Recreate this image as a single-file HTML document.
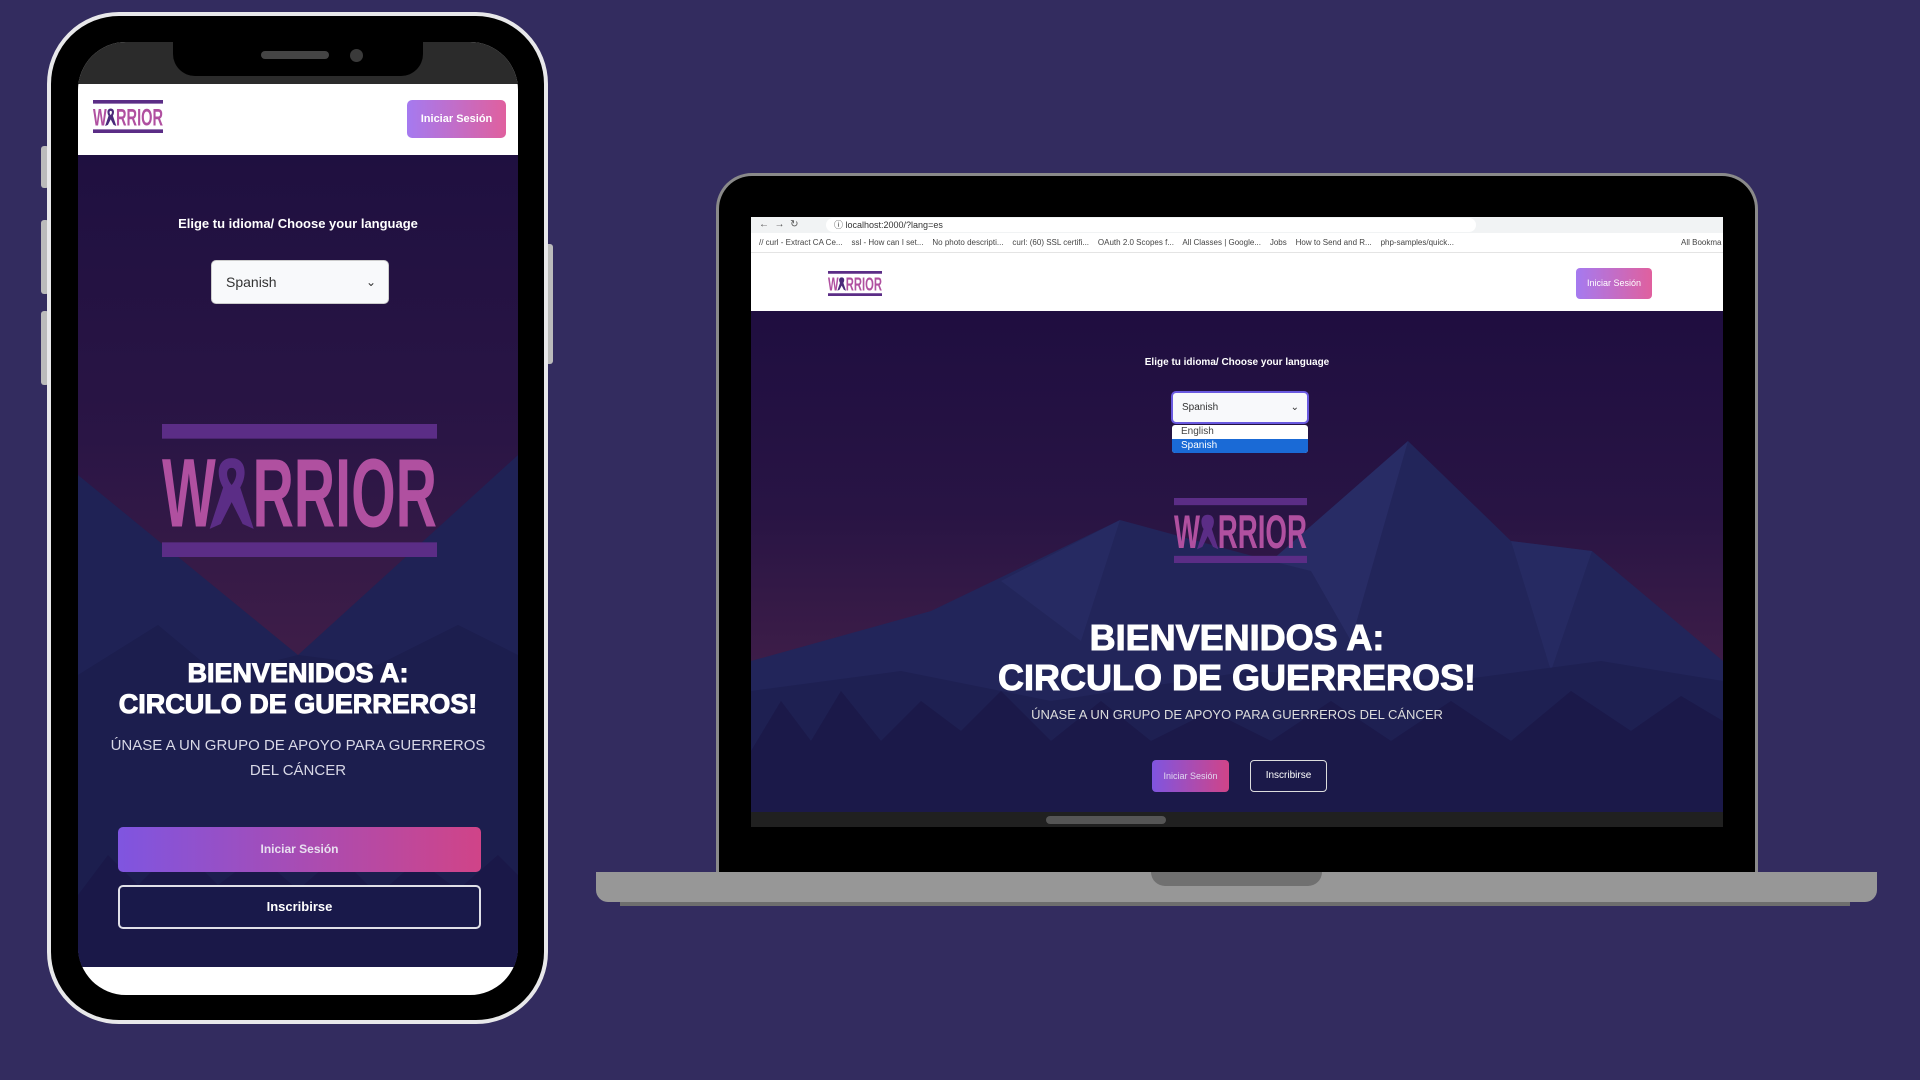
<!DOCTYPE html>
<html><head><meta charset="utf-8"><style>
*{margin:0;padding:0;box-sizing:border-box}
body{width:1920px;height:1080px;background:#332c5f;position:relative;overflow:hidden;font-family:"Liberation Sans",sans-serif}
.abs{position:absolute}
.c{text-align:center;color:#fff}
</style></head><body>

<!-- PHONE -->
<div class="abs" style="left:41px;top:146px;width:8px;height:42px;background:#bbb;border-radius:3px"></div>
<div class="abs" style="left:41px;top:220px;width:8px;height:74px;background:#bbb;border-radius:3px"></div>
<div class="abs" style="left:41px;top:311px;width:8px;height:74px;background:#bbb;border-radius:3px"></div>
<div class="abs" style="left:545px;top:244px;width:8px;height:120px;background:#bbb;border-radius:3px"></div>
<div class="abs" style="left:47px;top:12px;width:501px;height:1012px;background:#000;border:4px solid #e8e8ea;border-radius:72px"></div>
<div class="abs" style="left:78px;top:42px;width:440px;height:953px;background:#fff;border-radius:48px;overflow:hidden">
  <div class="abs" style="left:0;top:0;width:440px;height:42px;background:#2b2b2b"></div>
  <div class="abs" style="left:95px;top:0;width:250px;height:34px;background:#000;border-radius:0 0 22px 22px"></div>
  <div class="abs" style="left:183px;top:9px;width:68px;height:8px;background:#444;border-radius:4px"></div>
  <div class="abs" style="left:272px;top:7px;width:13px;height:13px;background:#3a3a3a;border-radius:50%"></div>
  <svg class="abs" style="left:15px;top:58px" width="70" height="33" viewBox="0 0 225 109" preserveAspectRatio="none">
    <rect width="225" height="12" fill="#5b2d86"/><rect y="97" width="225" height="12" fill="#5b2d86"/>
    <text x="0" y="84" font-family="Liberation Sans" font-weight="bold" font-size="80" textLength="44" lengthAdjust="spacingAndGlyphs" fill="#b050a0">W</text>
    <path d="M57 28 C45 28 44 42 50 52 L39 86 L48 82 L57 64 L66 82 L75 86 L64 52 C70 42 69 28 57 28 Z M57 36 C62 36 62 44 57 50 C52 44 52 36 57 36Z" fill="#4a2a7a" fill-rule="evenodd"/>
    <text x="74" y="84" font-family="Liberation Sans" font-weight="bold" font-size="80" textLength="151" lengthAdjust="spacingAndGlyphs" fill="#b050a0">RRIOR</text>
  </svg>
  <div class="abs c" style="left:329px;top:58px;width:99px;height:38px;border-radius:5px;background:linear-gradient(90deg,#a57af0,#e0609e);font-size:11px;font-weight:bold;line-height:38px">Iniciar Sesión</div>
  <div class="abs" style="left:0;top:113px;width:440px;height:812px;background:linear-gradient(#1f1040 0%,#2a1545 35%,#3d1d48 60%,#3a1d48 100%);overflow:hidden">
    <svg class="abs" style="left:0;top:0" width="440" height="812">
      <polygon points="0,320 220,500 440,300 440,812 0,812" fill="#1f2255"/>
      <polygon points="0,520 80,470 140,520 220,500 300,510 380,470 440,500 440,812 0,812" fill="#1c1e4e"/>
      <polygon points="0,740 30,700 60,730 100,690 140,730 180,700 220,735 260,700 300,740 340,705 380,735 420,700 440,720 440,812 0,812" fill="#1a1848"/>
    </svg>
    <div class="abs c" style="left:0;top:61px;width:440px;font-size:13px;font-weight:bold">Elige tu idioma/ Choose your language</div>
    <div class="abs" style="left:133px;top:105px;width:178px;height:44px;background:#f8f9fb;border-radius:5px;border:1px solid #ccc;font-size:14px;color:#333;line-height:42px;padding-left:14px">Spanish<span style="position:absolute;right:12px;top:0;font-size:12px">&#8964;</span></div>
    <svg class="abs" style="left:84px;top:269px" width="275" height="133" viewBox="0 0 225 109" preserveAspectRatio="none">
      <rect width="225" height="12" fill="#5b2d86"/><rect y="97" width="225" height="12" fill="#5b2d86"/>
      <text x="0" y="84" font-family="Liberation Sans" font-weight="bold" font-size="80" textLength="44" lengthAdjust="spacingAndGlyphs" fill="#b050a0">W</text>
      <path d="M57 28 C45 28 44 42 50 52 L39 86 L48 82 L57 64 L66 82 L75 86 L64 52 C70 42 69 28 57 28 Z M57 36 C62 36 62 44 57 50 C52 44 52 36 57 36Z" fill="#5b2d86" fill-rule="evenodd"/>
      <text x="74" y="84" font-family="Liberation Sans" font-weight="bold" font-size="80" textLength="151" lengthAdjust="spacingAndGlyphs" fill="#b050a0">RRIOR</text>
    </svg>
    <div class="abs c" style="left:0;top:503px;width:440px;font-size:27px;font-weight:900;line-height:31px;-webkit-text-stroke:1px #fff">BIENVENIDOS A:<br>CIRCULO DE GUERREROS!</div>
    <div class="abs c" style="left:25px;top:578px;width:390px;font-size:15px;line-height:25px;color:#d8d8e6">ÚNASE A UN GRUPO DE APOYO PARA GUERREROS DEL CÁNCER</div>
    <div class="abs c" style="left:40px;top:672px;width:363px;height:45px;border-radius:5px;background:linear-gradient(90deg,#7f55e0,#d04488);font-size:12px;font-weight:bold;line-height:45px;color:#e8e0f0">Iniciar Sesión</div>
    <div class="abs c" style="left:40px;top:730px;width:363px;height:44px;border-radius:5px;border:2px solid #e0e0e8;background:#19194a;font-size:13px;font-weight:bold;line-height:40px">Inscribirse</div>
  </div>
</div>

<!-- LAPTOP -->
<div class="abs" style="left:716px;top:173px;width:1042px;height:710px;background:#000;border:3px solid #8a8a8a;border-bottom:none;border-radius:36px 36px 0 0"></div>
<div class="abs" style="left:751px;top:217px;width:972px;height:610px;background:#fff;overflow:hidden;font-size:9px;color:#333">
  <div class="abs" style="left:0;top:0;width:972px;height:16px;background:#f1f3f4"></div>
  <div class="abs" style="left:8px;top:2px;font-size:10px;color:#555">&#8592; &nbsp;&#8594; &nbsp;&#8635;</div>
  <div class="abs" style="left:75px;top:1px;width:650px;height:14px;background:#fff;border-radius:7px;font-size:9px;padding-left:8px;line-height:14px">&#9432; localhost:2000/?lang=es</div>
  <div class="abs" style="left:0;top:16px;width:972px;height:20px;background:#fff;border-bottom:1px solid #e4e4e4;font-size:8px;line-height:20px;padding-left:8px;white-space:nowrap;color:#444">// curl - Extract CA Ce... &nbsp;&nbsp; ssl - How can I set... &nbsp;&nbsp; No photo descripti... &nbsp;&nbsp; curl: (60) SSL certifi... &nbsp;&nbsp; OAuth 2.0 Scopes f... &nbsp;&nbsp; All Classes | Google... &nbsp;&nbsp; Jobs &nbsp;&nbsp; How to Send and R... &nbsp;&nbsp; php-samples/quick...<span style="position:absolute;left:930px">All Bookma</span></div>
  <svg class="abs" style="left:77px;top:54px" width="54" height="25" viewBox="0 0 225 109" preserveAspectRatio="none">
    <rect width="225" height="12" fill="#5b2d86"/><rect y="97" width="225" height="12" fill="#5b2d86"/>
    <text x="0" y="84" font-family="Liberation Sans" font-weight="bold" font-size="80" textLength="44" lengthAdjust="spacingAndGlyphs" fill="#b050a0">W</text>
    <path d="M57 28 C45 28 44 42 50 52 L39 86 L48 82 L57 64 L66 82 L75 86 L64 52 C70 42 69 28 57 28 Z" fill="#4a2a7a"/>
    <text x="74" y="84" font-family="Liberation Sans" font-weight="bold" font-size="80" textLength="151" lengthAdjust="spacingAndGlyphs" fill="#b050a0">RRIOR</text>
  </svg>
  <div class="abs c" style="left:825px;top:51px;width:76px;height:31px;border-radius:4px;background:linear-gradient(90deg,#a57af0,#e0609e);font-size:9px;line-height:31px">Iniciar Sesión</div>
  <div class="abs" style="left:0;top:94px;width:972px;height:501px;background:linear-gradient(#1f0e40 0%,#281444 40%,#3d1d48 70%,#3a1d48 100%);overflow:hidden">
    <svg class="abs" style="left:0;top:0" width="972" height="501">
      <polygon points="0,350 180,300 369,209 520,250 657,130 760,230 841,240 972,350 972,501 0,501" fill="#22255a"/>
      <polygon points="657,130 600,330 560,260 520,250" fill="#2a2e68" opacity=".8"/>
      <polygon points="369,209 330,330 250,270" fill="#2a2e68" opacity=".6"/>
      <polygon points="841,240 800,360 760,230" fill="#2a2e68" opacity=".6"/>
      <polygon points="0,380 150,360 300,390 500,360 700,370 850,350 972,370 972,501 0,501" fill="#1e2052"/>
      <polygon points="0,440 30,390 60,430 90,380 130,430 170,390 210,420 250,380 300,430 350,390 400,430 460,400 520,430 580,390 640,430 700,390 760,430 820,380 880,420 930,385 972,410 972,501 0,501" fill="#1b1949"/>
    </svg>
  </div>
  <div class="abs" style="left:0;top:595px;width:972px;height:15px;background:#202020"></div>
  <div class="abs" style="left:295px;top:599px;width:120px;height:8px;background:#555;border-radius:4px"></div>
  <div class="abs c" style="left:0;top:140px;width:972px;font-size:10px;font-weight:bold">Elige tu idioma/ Choose your language</div>
  <div class="abs" style="left:420px;top:174px;width:138px;height:33px;background:#f8f9fb;border:2px solid #6a5ae0;border-radius:5px;font-size:10px;color:#333;line-height:29px;padding-left:9px">Spanish<span style="position:absolute;right:8px;top:0">&#8964;</span></div>
  <div class="abs" style="left:421px;top:208px;width:136px;height:28px;background:#fff;border-radius:3px;font-size:10px;color:#444;overflow:hidden">
    <div style="height:14px;line-height:14px;padding-left:9px">English</div>
    <div style="height:14px;line-height:14px;padding-left:9px;background:#1a6ad6;color:#fff">Spanish</div>
  </div>
  <svg class="abs" style="left:423px;top:281px" width="133" height="65" viewBox="0 0 225 109" preserveAspectRatio="none">
    <rect width="225" height="12" fill="#5b2d86"/><rect y="97" width="225" height="12" fill="#5b2d86"/>
    <text x="0" y="84" font-family="Liberation Sans" font-weight="bold" font-size="80" textLength="44" lengthAdjust="spacingAndGlyphs" fill="#b050a0">W</text>
    <path d="M57 28 C45 28 44 42 50 52 L39 86 L48 82 L57 64 L66 82 L75 86 L64 52 C70 42 69 28 57 28 Z" fill="#5b2d86"/>
    <text x="74" y="84" font-family="Liberation Sans" font-weight="bold" font-size="80" textLength="151" lengthAdjust="spacingAndGlyphs" fill="#b050a0">RRIOR</text>
  </svg>
  <div class="abs c" style="left:0;top:401px;width:972px;font-size:36px;font-weight:900;line-height:40px;-webkit-text-stroke:1px #fff">BIENVENIDOS A:<br>CIRCULO DE GUERREROS!</div>
  <div class="abs c" style="left:0;top:490px;width:972px;font-size:13px;color:#ddd">ÚNASE A UN GRUPO DE APOYO PARA GUERREROS DEL CÁNCER</div>
  <div class="abs c" style="left:401px;top:543px;width:77px;height:32px;border-radius:4px;background:linear-gradient(90deg,#7f55e0,#d04488);font-size:9px;line-height:32px;color:#e0d8f0">Iniciar Sesión</div>
  <div class="abs c" style="left:499px;top:543px;width:77px;height:32px;border-radius:4px;border:1.5px solid #ddd;font-size:10px;line-height:29px">Inscribirse</div>
</div>
<div class="abs" style="left:596px;top:872px;width:1281px;height:30px;background:#979797;border-radius:0 0 12px 12px"></div>
<div class="abs" style="left:620px;top:902px;width:1230px;height:4px;background:#6e6e6e"></div>
<div class="abs" style="left:1151px;top:872px;width:171px;height:14px;background:#707070;border-radius:0 0 14px 14px"></div>
</body></html>
